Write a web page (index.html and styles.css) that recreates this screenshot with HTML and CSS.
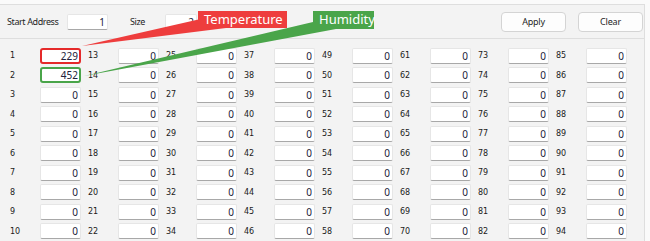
FILE: index.html
```html
<!DOCTYPE html>
<html lang="en">
<head>
    <meta charset="UTF-8">
    <title>Register Map</title>
    <link rel="stylesheet" href="styles.css">
</head>
<body>
    <div class="panel">
        <div class="toolbar">
            <span class="tb-label">Start Address</span>
            <input class="field start-field" type="text" value="1">
            <span class="tb-label size-label">Size</span>
            <input class="field size-field" type="text" value="2">
            <div class="buttons">
                <button class="btn">Apply</button>
                <button class="btn">Clear</button>
            </div>
        </div>
        <div class="grid" id="grid">
            <!-- register cells are added by the script below -->
        </div>
    </div>

    <!-- callouts drawn over the grid -->
    <svg class="callouts" width="650" height="241">
        <polygon points="82,46 205,18 226,28" fill="#ee3d3d"/>
        <polygon points="84,76 313,22 336,29" fill="#4aa54a"/>
    </svg>
    <div class="tag tag-temp">Temperature</div>
    <div class="tag tag-hum">Humidity</div>

    <script>
        // values for the first registers, the rest are 0
        const values = { 1: 229, 2: 452 };
        const grid = document.getElementById('grid');
        const perColumn = 12;   // registers per column
        const visibleRows = 10; // rows that fit in the window

        for (let col = 0; col < 8; col++) {
            for (let row = 0; row < visibleRows; row++) {
                const n = col * perColumn + row + 1;

                const cell = document.createElement('div');
                cell.classList.add('cell');

                const label = document.createElement('span');
                label.classList.add('reg-label');
                label.textContent = n;

                const input = document.createElement('input');
                input.type = 'text';
                input.classList.add('field', 'reg-field');
                input.value = values[n] || 0;
                if (n === 1) input.classList.add('hl-red');
                if (n === 2) input.classList.add('hl-green');

                cell.appendChild(label);
                cell.appendChild(input);
                grid.appendChild(cell);
            }
        }
    </script>
</body>
</html>
```
FILE: styles.css
```css
html, body {
    margin: 0;
    padding: 0;
    overflow: hidden;
    height: 241px;
    background-color: #fafafa;
    font-family: 'Noto Sans', sans-serif;
    color: #1f1f1f;
}

.panel {
    margin-top: 4px;
    width: 644px;
    height: 236px;
    background-color: #f3f3f3;
    border-top: 1px solid #dedede;
    border-right: 1px solid #dedede;
}

.toolbar {
    display: flex;
    align-items: center;
    height: 33px;
    padding-left: 7px;
    border-bottom: 1px solid #dedede;
}

.toolbar > * {
    flex: none;
}

.tb-label {
    font-size: 9px;
    letter-spacing: -0.4px;
    width: 60px;
    white-space: nowrap;
}

.size-label {
    margin-left: 22px;
    width: 35px;
}

.field {
    box-sizing: border-box;
    height: 16px;
    padding: 0 2px;
    background: #fff;
    border: 1px solid #e6e6e6;
    border-bottom-color: #a8a8a8;
    border-radius: 2px;
    text-align: right;
    font-family: 'Noto Sans', sans-serif;
    font-size: 10px;
    color: #22223a;
    outline: none;
}

.start-field {
    width: 41px;
}

.size-field {
    width: 32px;
}

.buttons {
    display: flex;
    gap: 12px;
    margin-left: auto;
    margin-right: 1px;
}

.btn {
    width: 65px;
    height: 20px;
    padding: 0;
    background: #fdfdfd;
    border: 1px solid #d4d4d4;
    border-radius: 4px;
    font-family: 'Noto Sans', sans-serif;
    font-size: 9px;
    letter-spacing: -0.2px;
    color: #1f1f1f;
}

.grid {
    display: grid;
    grid-template-rows: repeat(10, 19.5px);
    grid-auto-flow: column;
    grid-auto-columns: 78px;
    padding: 7px 0 0 10px;
}

.cell {
    display: flex;
    align-items: center;
}

.reg-label {
    width: 30px;
    font-family: 'DejaVu Sans', sans-serif;
    font-size: 8px;
    color: #1a1a1a;
}

.reg-field {
    width: 41px;
}

.hl-red {
    border: 2px solid #e52a2a;
    border-radius: 3px;
    padding-right: 1px;
}

.hl-green {
    border: 2px solid #4aa54a;
    border-radius: 3px;
    padding-right: 1px;
}

/* callouts */
.callouts {
    position: absolute;
    left: 0;
    top: 0;
    pointer-events: none;
}

.tag {
    position: absolute;
    top: 11px;
    height: 17px;
    padding-left: 6px;
    box-sizing: border-box;
    color: #fff;
    font-family: 'Noto Sans', sans-serif;
    font-size: 13px;
    line-height: 17px;
}

.tag-temp {
    left: 198px;
    width: 89px;
    background-color: #ee3d3d;
}

.tag-hum {
    left: 313px;
    width: 61px;
    height: 18px;
    background-color: #4aa54a;
}
```
